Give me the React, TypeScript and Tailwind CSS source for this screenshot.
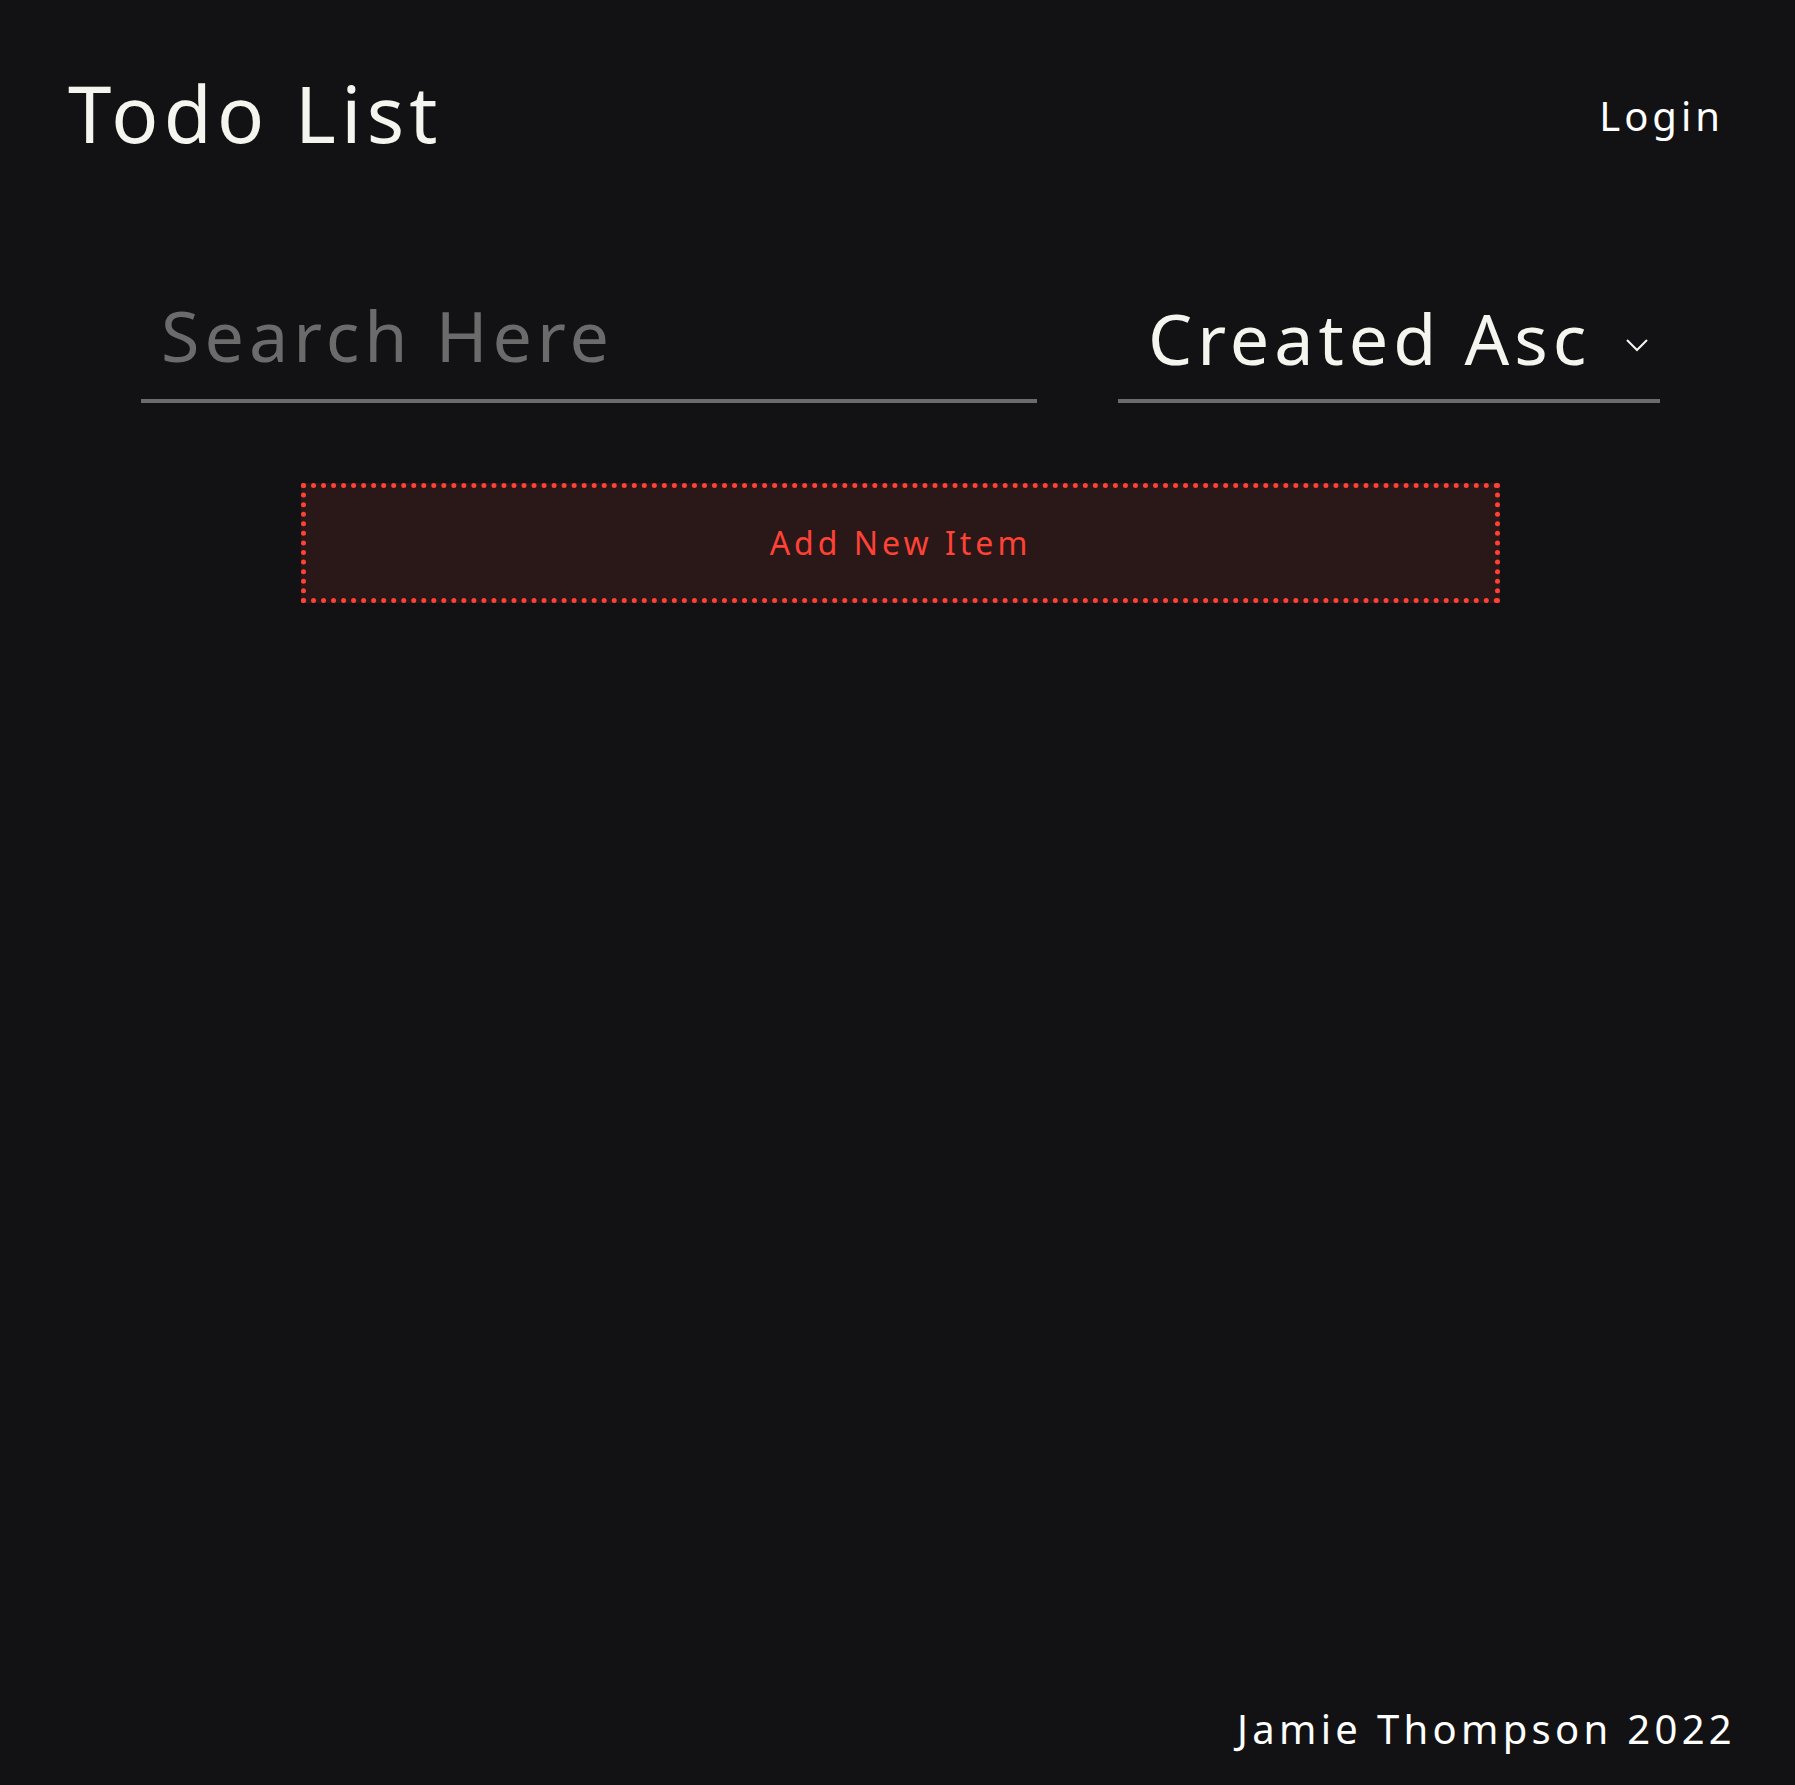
import React from "react";

export default function App() {
  return (
    <div
      className="min-h-[1785px] w-full bg-[#121214] flex flex-col text-[#f5f5ef]"
      style={{ fontFamily: '"Noto Sans", "Open Sans", sans-serif' }}
    >
      <header className="flex items-start justify-between pl-[68px] pr-[71px] pt-[74px]">
        <h1 className="text-[78px] leading-none tracking-[5.3px] font-normal">Todo List</h1>
        <button className="mt-[22px] text-[40px] leading-none tracking-[4px] text-white">Login</button>
      </header>

      <div className="mt-[135px] flex items-end pl-[141px] pr-[135px] gap-[81px]">
        <div className="w-[896px] border-b-4 border-[#6b6b6b] pl-[20px] pb-[16px]">
          <input
            placeholder="Search Here"
            className="w-full bg-transparent outline-none text-[70px] leading-none tracking-[5px] text-[#f5f5ef] placeholder:text-[#6b6b6b]"
          />
        </div>
        <div className="flex-1 border-b-4 border-[#6b6b6b] pl-[30px] pr-[10px] pb-[26px] flex items-center justify-between">
          <span className="text-[70px] leading-none tracking-[5px]">Created Asc</span>
          <svg width="22" height="14" viewBox="0 0 22 14" className="mr-[2px] mt-[14px]" fill="none">
            <path d="M1 2 L11 12 L21 2" stroke="#f5f5ef" strokeWidth="2" />
          </svg>
        </div>
      </div>

      <div className="mt-[80px] flex justify-center pl-[6px]">
        <button className="w-[1199px] h-[120px] border-[5px] border-dotted border-[#ff4136] bg-[#2a1818] text-[#ff4136] text-[32px] tracking-[4px] leading-none">
          Add New Item
        </button>
      </div>

      <div className="flex-1" />

      <footer className="flex justify-end pr-[59px] pb-[36px]">
        <span className="text-[40px] leading-none tracking-[4.3px] text-white">Jamie Thompson 2022</span>
      </footer>
    </div>
  );
}
